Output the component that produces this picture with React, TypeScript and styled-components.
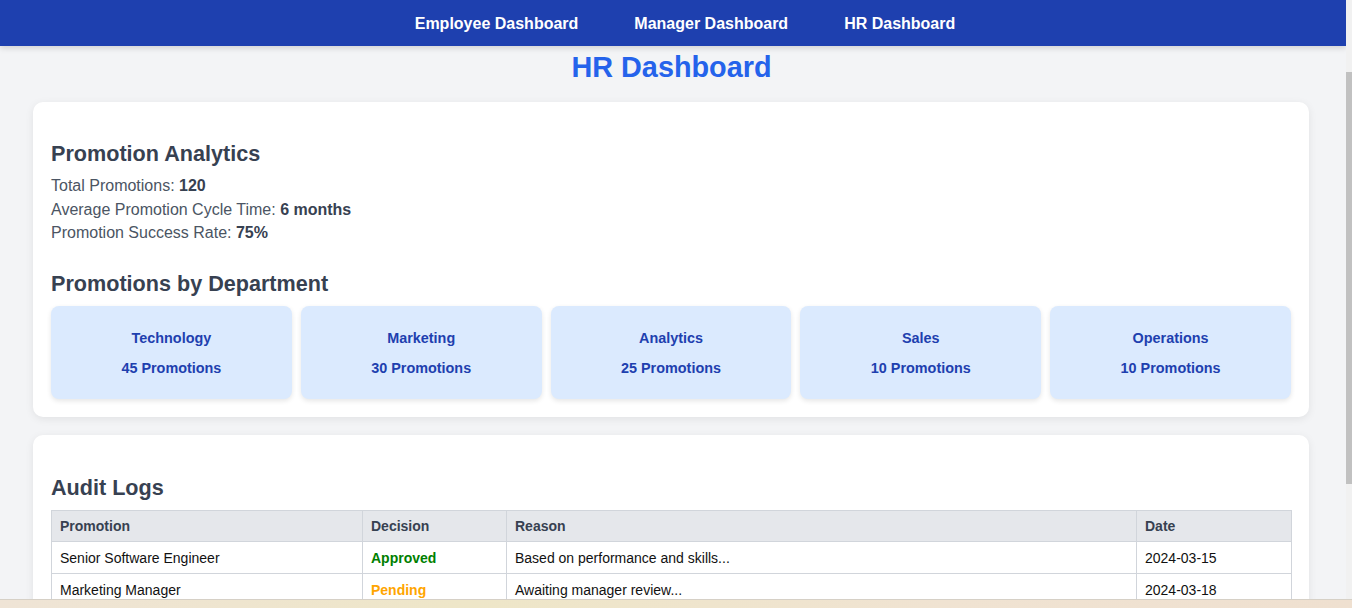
import React from 'react';
import styled, { createGlobalStyle } from 'styled-components';

const GlobalStyle = createGlobalStyle`
  html, body {
    margin: 0;
    padding: 0;
    background: #f3f4f6;
    font-family: "Liberation Sans", Arial, sans-serif;
  }
  body {
    padding-right: 6px;
  }
`;

const NavBar = styled.nav`
  height: 46px;
  box-sizing: border-box;
  padding: 2px 0 0 24px;
  background: #1e40af;
  box-shadow: 0 2px 6px rgba(0, 0, 0, 0.15);
  display: flex;
  justify-content: center;
  align-items: center;
  gap: 56px;
`;

const NavLink = styled.a`
  color: #ffffff;
  font-weight: 700;
  font-size: 16px;
  text-decoration: none;
  cursor: pointer;
`;

const Main = styled.main`
  padding: 0 33px 40px;
`;

const PageTitle = styled.h1`
  margin: 5px 0 18px;
  padding-right: 3px;
  text-align: center;
  color: #2563eb;
  font-size: 28.8px;
  font-weight: 700;
  line-height: 33px;
`;

const Card = styled.section`
  max-width: 1276px;
  background: #ffffff;
  border-radius: 10px;
  box-shadow: 0 2px 8px rgba(0, 0, 0, 0.08);
  padding: 18px;
  box-sizing: border-box;
  margin-bottom: 18px;
`;

const SectionTitle = styled.h2<{ $top?: number; $bottom?: number }>`
  margin: ${({ $top }) => $top ?? 21}px 0 ${({ $bottom }) => $bottom ?? 8}px;
  font-size: 21.6px;
  line-height: 25px;
  font-weight: 700;
  color: #374151;
`;

const StatLine = styled.p`
  margin: 0;
  font-size: 16px;
  line-height: 23.5px;
  color: #4b5563;

  strong {
    color: #374151;
  }
`;

const DeptGrid = styled.div`
  display: grid;
  grid-template-columns: repeat(5, 1fr);
  gap: 9px;
`;

const DeptBox = styled.div`
  background: #dbeafe;
  border-radius: 8px;
  box-shadow: 0 2px 5px rgba(0, 0, 0, 0.1);
  padding: 20px 8px 19px;
  display: flex;
  flex-direction: column;
  align-items: center;
  gap: 6px;
  color: #1e40af;
  font-weight: 700;
  font-size: 14.4px;
  line-height: 24px;
`;

const Table = styled.table`
  width: 100%;
  border-collapse: collapse;
  table-layout: fixed;
  font-size: 14px;
`;

const Th = styled.th`
  background: #e5e7eb;
  color: #374151;
  font-weight: 700;
  text-align: left;
  padding: 7px 8px;
  line-height: 16px;
  border: 1px solid #d1d5db;
`;

const Td = styled.td`
  color: #111111;
  padding: 8px 8px 6px;
  line-height: 17px;
  border: 1px solid #d1d5db;
`;

const Decision = styled.span<{ $status: string }>`
  font-weight: 700;
  color: ${({ $status }) =>
    $status === 'Approved' ? '#008000' : $status === 'Pending' ? '#ffa500' : '#dc2626'};
`;

// the window's scrollbar and task bar from the screenshot
const ScrollTrack = styled.div`
  position: fixed;
  top: 0;
  right: 0;
  bottom: 0;
  width: 6px;
  background: #f1f1f1;
  display: flex;
  flex-direction: column;
  padding-top: 72px;
  box-sizing: border-box;
`;

const ScrollThumb = styled.div`
  height: 412px;
  background: #c1c1c1;
`;

const Taskbar = styled.div`
  position: fixed;
  left: 0;
  right: 0;
  bottom: 0;
  height: 8px;
  border-top: 1px solid #d6d0c6;
  background: linear-gradient(90deg, #efe4d6 0%, #eee6c8 35%, #f0e3d2 70%, #efe0d0 100%);
`;

const departments = [
  { name: 'Technology', count: 45 },
  { name: 'Marketing', count: 30 },
  { name: 'Analytics', count: 25 },
  { name: 'Sales', count: 10 },
  { name: 'Operations', count: 10 },
];

const logs = [
  { promotion: 'Senior Software Engineer', decision: 'Approved', reason: 'Based on performance and skills...', date: '2024-03-15' },
  { promotion: 'Marketing Manager', decision: 'Pending', reason: 'Awaiting manager review...', date: '2024-03-18' },
  { promotion: 'Data Analyst II', decision: 'Rejected', reason: 'Does not meet tenure requirement...', date: '2024-03-20' },
  { promotion: 'Sales Team Lead', decision: 'Approved', reason: 'Exceeded quarterly targets...', date: '2024-03-22' },
  { promotion: 'Operations Supervisor', decision: 'Pending', reason: 'Awaiting HR verification...', date: '2024-03-25' },
];

const App = () => {
  return (
    <>
      <GlobalStyle />
      <NavBar>
        <NavLink>Employee Dashboard</NavLink>
        <NavLink>Manager Dashboard</NavLink>
        <NavLink>HR Dashboard</NavLink>
      </NavBar>

      <Main>
        <PageTitle>HR Dashboard</PageTitle>

        <Card>
          <SectionTitle>Promotion Analytics</SectionTitle>
          <StatLine>
            Total Promotions: <strong>120</strong>
          </StatLine>
          <StatLine>
            Average Promotion Cycle Time: <strong>6 months</strong>
          </StatLine>
          <StatLine>
            Promotion Success Rate: <strong>75%</strong>
          </StatLine>

          <SectionTitle $top={26} $bottom={10}>Promotions by Department</SectionTitle>
          <DeptGrid>
            {departments.map((d) => (
              <DeptBox key={d.name}>
                <span>{d.name}</span>
                <span>{d.count} Promotions</span>
              </DeptBox>
            ))}
          </DeptGrid>
        </Card>

        <Card>
          <SectionTitle $top={22} $bottom={10}>Audit Logs</SectionTitle>
          <Table>
            <colgroup>
              <col style={{ width: 311 }} />
              <col style={{ width: 144 }} />
              <col style={{ width: 630 }} />
              <col style={{ width: 155 }} />
            </colgroup>
            <thead>
              <tr>
                <Th>Promotion</Th>
                <Th>Decision</Th>
                <Th>Reason</Th>
                <Th>Date</Th>
              </tr>
            </thead>
            <tbody>
              {logs.map((l) => (
                <tr key={l.promotion}>
                  <Td>{l.promotion}</Td>
                  <Td>
                    <Decision $status={l.decision}>{l.decision}</Decision>
                  </Td>
                  <Td>{l.reason}</Td>
                  <Td>{l.date}</Td>
                </tr>
              ))}
            </tbody>
          </Table>
        </Card>
      </Main>
      <ScrollTrack>
        <ScrollThumb />
      </ScrollTrack>
      <Taskbar />
    </>
  );
};

export default App;
